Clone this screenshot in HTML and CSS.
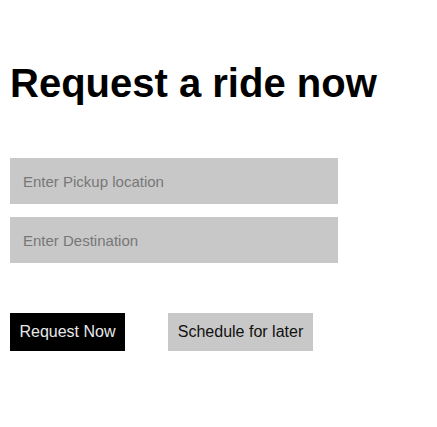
FILE: index.html
```html
<!DOCTYPE html>
<html lang="en">
<head>
    <meta charset="UTF-8">
    <meta name="viewport" content="width=device-width, initial-scale=1.0">
    <title>Request a ride</title>
    <link rel="stylesheet" href="styles.css">
</head>
<body>
    <div class="page">
        <h1>Request a ride now</h1>

        <div class="fields">
            <input class="field" type="text" placeholder="Enter Pickup location">
            <input class="field" type="text" placeholder="Enter Destination">
        </div>

        <div class="actions">
            <button class="btn btn-primary">Request Now</button>
            <button class="btn btn-secondary">Schedule for later</button>
        </div>
    </div>
</body>
</html>
```

FILE: styles.css
```css
body {
    margin: 0;
    font-family: "Liberation Sans", Arial, sans-serif;
    background-color: #fff;
    color: #000;
}
.page {
    padding: 60px 10px 10px;
}
h1 {
    margin: 0;
    font-size: 40px;
    font-weight: bold;
    line-height: 46px;
}
.fields {
    display: flex;
    flex-direction: column;
    gap: 13px;
    margin-top: 52px;
}
.field {
    box-sizing: border-box;
    width: 328px;
    height: 46px;
    padding: 0 13px;
    border: none;
    background-color: #c8c8c8;
    font-family: inherit;
    font-size: 15px;
    color: #333;
    outline: none;
}
.field::placeholder {
    color: #777;
}
.actions {
    display: flex;
    gap: 43px;
    margin-top: 50px;
}
.btn {
    height: 38px;
    padding: 0 8px;
    border: none;
    font-family: inherit;
    font-size: 16px;
    cursor: pointer;
}
.btn-primary {
    width: 115px;
    background-color: #000;
    color: #e8e8e8;
}
.btn-secondary {
    width: 145px;
    background-color: #c8c8c8;
    color: #111;
}
```
